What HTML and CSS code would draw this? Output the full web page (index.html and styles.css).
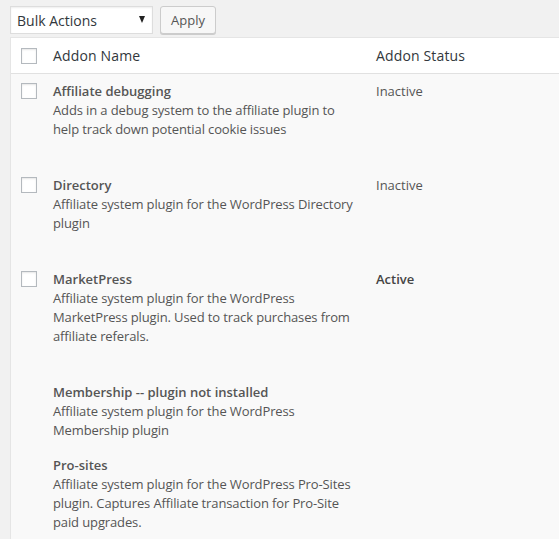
FILE: index.html
```html
<!DOCTYPE html>
<html>
<head>
<meta charset="utf-8">
<link rel="stylesheet" href="styles.css">
</head>
<body>
<div class="tablenav">
  <div class="select"><span>Bulk Actions</span><span class="arrow"></span></div>
  <button class="button">Apply</button>
</div>
<div class="table">
  <div class="row head">
    <div class="cell check"><span class="cb"></span></div>
    <div class="cell name">Addon Name</div>
    <div class="cell status">Addon Status</div>
  </div>
  <div class="row body-row extra">
    <div class="cell check"><span class="cb"></span></div>
    <div class="cell name"><div class="title">Affiliate debugging</div><div class="desc">Adds in a debug system to the affiliate plugin to help track down potential cookie issues</div></div>
    <div class="cell status">Inactive</div>
  </div>
  <div class="row body-row extra">
    <div class="cell check"><span class="cb"></span></div>
    <div class="cell name"><div class="title">Directory</div><div class="desc">Affiliate system plugin for the WordPress Directory plugin</div></div>
    <div class="cell status">Inactive</div>
  </div>
  <div class="row body-row extra">
    <div class="cell check"><span class="cb"></span></div>
    <div class="cell name"><div class="title">MarketPress</div><div class="desc">Affiliate system plugin for the WordPress MarketPress plugin. Used to track purchases from affiliate referals.</div></div>
    <div class="cell status active">Active</div>
  </div>
  <div class="row body-row">
    <div class="cell check"></div>
    <div class="cell name"><div class="title">Membership -- plugin not installed</div><div class="desc">Affiliate system plugin for the WordPress Membership plugin</div></div>
    <div class="cell status"></div>
  </div>
  <div class="row body-row">
    <div class="cell check"></div>
    <div class="cell name"><div class="title">Pro-sites</div><div class="desc">Affiliate system plugin for the WordPress Pro-Sites plugin. Captures Affiliate transaction for Pro-Site paid upgrades.</div></div>
    <div class="cell status"></div>
  </div>
</div>
</body>
</html>
```
FILE: styles.css
```css
html, body {
  margin: 0;
  padding: 0;
}
body {
  background: #f1f1f1;
  font-family: "Open Sans", "Liberation Sans", sans-serif;
  font-size: 13px;
  line-height: 19px;
  color: #555;
}
.tablenav {
  display: flex;
  gap: 7px;
  padding: 6px 10px 0 10px;
  height: 31px;
}
.select {
  box-sizing: border-box;
  width: 143px;
  height: 28px;
  background: #fff;
  border: 1px solid #ddd;
  box-shadow: inset 0 1px 2px rgba(0,0,0,0.07);
  display: flex;
  align-items: center;
  justify-content: space-between;
  padding: 0 6px 0 6px;
  font-size: 14px;
  color: #32373c;
}
.arrow {
  width: 0;
  height: 0;
  border-left: 3.5px solid transparent;
  border-right: 3.5px solid transparent;
  border-top: 7px solid #222;
  margin-right: 1px;
  margin-top: -2px;
}
.button {
  box-sizing: border-box;
  height: 28px;
  padding: 0 10px;
  background: #f7f7f7;
  border: 1px solid #ccc;
  border-radius: 3px;
  box-shadow: 0 1px 0 #ccc;
  font-family: "Open Sans", "Liberation Sans", sans-serif;
  font-size: 13px;
  color: #555;
  line-height: 26px;
}
.table {
  margin-left: 10px;
  border: 1px solid #e5e5e5;
  border-right: none;
  background: #f9f9f9;
}
.row {
  display: grid;
  grid-template-columns: 32px 323px 1fr;
}
.head {
  background: #fff;
  border-bottom: 1px solid #e1e1e1;
  height: 35px;
  align-items: center;
  font-size: 14px;
  letter-spacing: 0.15px;
  color: #32373c;
}
.cell.name, .cell.status {
  padding-left: 10px;
}
.cell.name {
  padding-right: 10px;
}
.head .check {
  padding-left: 10px;
  padding-top: 1px;
}
.cb {
  display: block;
  box-sizing: border-box;
  width: 16px;
  height: 16px;
  border: 1px solid #b4b9be;
  background: #fff;
  box-shadow: inset 0 1px 2px rgba(0,0,0,0.1);
}
.body-row .cell {
  padding-top: 8px;
  padding-bottom: 8px;
}
.body-row.extra .cell {
  padding-bottom: 29px;
}
.body-row .check {
  padding-left: 10px;
  padding-top: 9px;
}
.title {
  font-weight: 600;
  color: #555;
}
.desc {
  letter-spacing: -0.12px;
}
.status.active {
  font-weight: 600;
  color: #444;
}
```
